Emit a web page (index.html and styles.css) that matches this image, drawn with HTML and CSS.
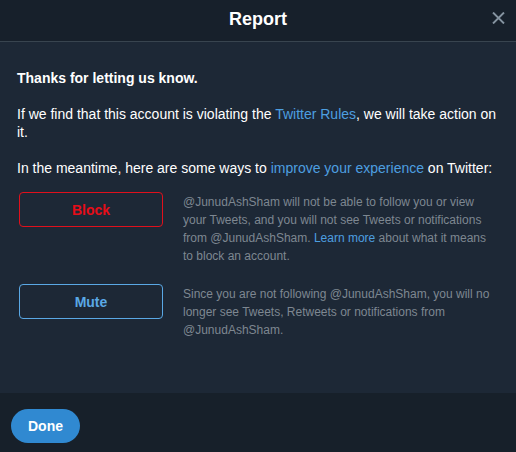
FILE: index.html
```html
<!DOCTYPE html>
<html>
<head>
<meta charset="utf-8">
<link rel="stylesheet" href="styles.css">
</head>
<body>
<div class="modal">
  <header class="head">
    <h1 class="title">Report</h1>
    <button class="close" aria-label="Close">
      <svg width="13" height="12" viewBox="0 0 13 12"><path d="M1 0.5 L12 11.5 M12 0.5 L1 11.5" stroke="#8593a0" stroke-width="1.9" fill="none"/></svg>
    </button>
  </header>
  <main class="body">
    <p class="thanks">Thanks for letting us know.</p>
    <p class="para">If we find that this account is violating the <a class="link">Twitter Rules</a>, we will take action on it.</p>
    <p class="para last">In the meantime, here are some ways to <a class="link">improve your experience</a> on Twitter:</p>
    <div class="option">
      <button class="btn btn-block">Block</button>
      <p class="desc">@JunudAshSham will not be able to follow you or view your Tweets, and you will not see Tweets or notifications from @JunudAshSham. <a class="link">Learn more</a> about what it means to block an account.</p>
    </div>
    <div class="option">
      <button class="btn btn-mute">Mute</button>
      <p class="desc">Since you are not following @JunudAshSham, you will no longer see Tweets, Retweets or notifications from @JunudAshSham.</p>
    </div>
  </main>
  <footer class="foot">
    <button class="done">Done</button>
  </footer>
</div>
</body>
</html>
```

FILE: styles.css
```css
html, body {
  margin: 0;
  padding: 0;
  background: #1c2836;
}
.modal {
  width: 516px;
  height: 452px;
  display: flex;
  flex-direction: column;
  font-family: "Liberation Sans", Arial, sans-serif;
  background: #1d2836;
  color: #ffffff;
}
.head {
  height: 42px;
  flex: none;
  box-sizing: border-box;
  padding-bottom: 3px;
  background: #17202b;
  border-bottom: 1px solid #38444f;
  display: flex;
  align-items: center;
  justify-content: center;
  position: relative;
}
.title {
  margin: 0;
  font-size: 18px;
  line-height: 20px;
  font-weight: bold;
  color: #ffffff;
}
.close {
  position: absolute;
  right: 11px;
  top: 12px;
  width: 13px;
  height: 12px;
  padding: 0;
  border: 0;
  background: transparent;
  display: flex;
}
.body {
  flex: 1;
  padding: 27px 18px 0 17px;
}
.thanks {
  margin: 0 0 18px;
  font-size: 14px;
  font-weight: bold;
  line-height: 18px;
}
.para {
  margin: 0 0 18px;
  font-size: 14px;
  line-height: 18px;
  color: #ffffff;
}
.para.last {
  margin-bottom: 15px;
}
.link {
  color: #4d9fe0;
  text-decoration: none;
}
.option {
  display: flex;
  align-items: flex-start;
  gap: 20px;
  margin: 0 0 19px 2px;
}
.btn {
  flex: none;
  width: 144px;
  height: 35px;
  border-radius: 4px;
  background: transparent;
  font-family: "Liberation Sans", Arial, sans-serif;
  font-size: 14px;
  font-weight: bold;
}
.btn-block {
  border: 1px solid #e0101c;
  color: #e60d18;
}
.btn-mute {
  border: 1px solid #5aa8e5;
  color: #5aa8e5;
}
.desc {
  margin: 1px 0 0;
  width: 312px;
  font-size: 12px;
  line-height: 18px;
  color: #7d8791;
}
.desc .link {
  color: #4d9fe0;
}
.foot {
  height: 59px;
  flex: none;
  background: #17202a;
  display: flex;
  align-items: center;
  padding-left: 11px;
}
.done {
  width: 69px;
  height: 34px;
  margin-top: 6px;
  border: 0;
  border-radius: 17px;
  background: #3089d1;
  color: #ffffff;
  font-family: "Liberation Sans", Arial, sans-serif;
  font-size: 14px;
  font-weight: bold;
}
```
